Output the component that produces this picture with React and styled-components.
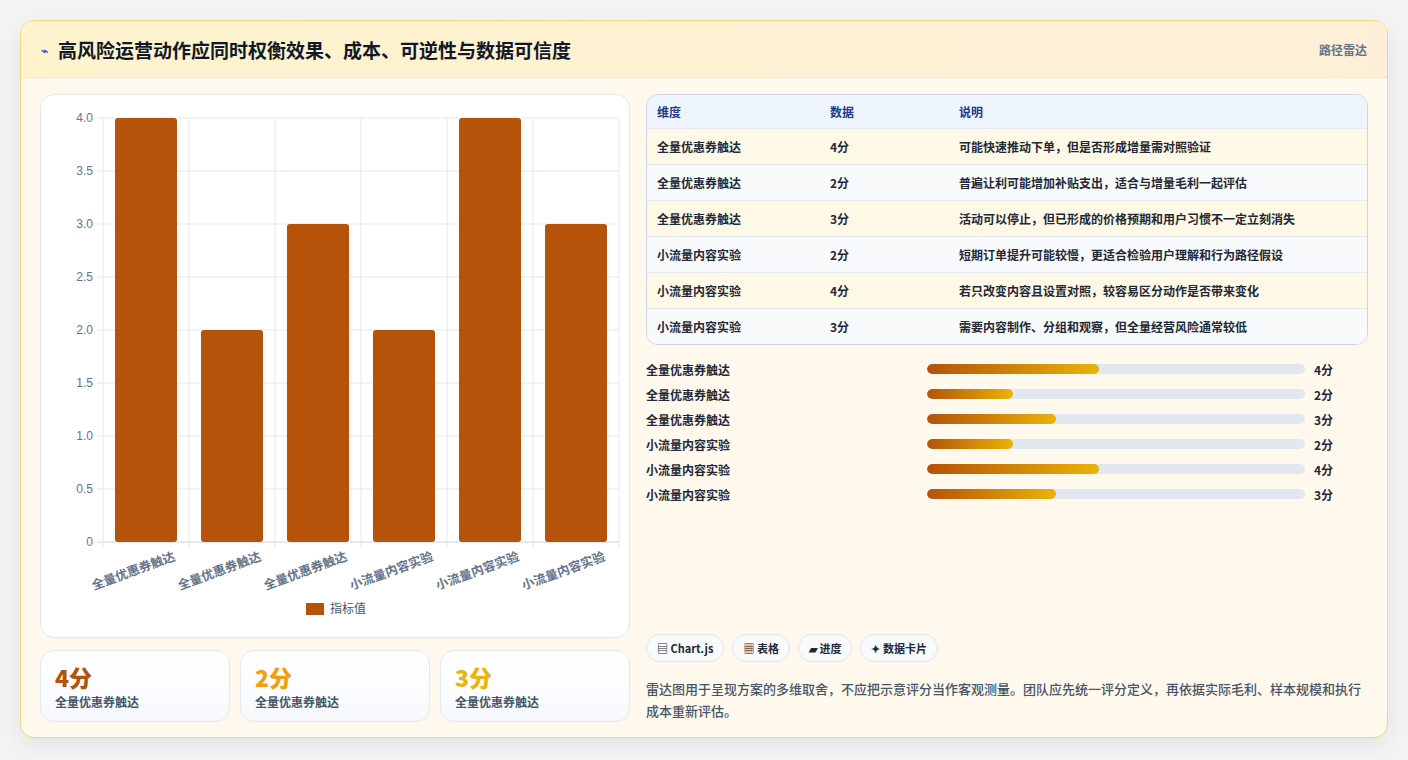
import React from 'react';
import styled, { createGlobalStyle } from 'styled-components';

const Global = createGlobalStyle`
  body { margin: 0; background: #f4f4f5; font-family: "Noto Sans CJK SC", "Noto Sans", sans-serif; }
`;

const Page = styled.div`
  padding: 20px;
`;

const Card = styled.div`
  height: 718px;
  box-sizing: border-box;
  border: 1px solid #f3d77a;
  border-radius: 14px;
  background: #fff8ec;
  box-shadow: 0 8px 24px rgba(0,0,0,0.08);
  overflow: hidden;
  display: flex;
  flex-direction: column;
`;

const Header = styled.div`
  height: 56px;
  flex-shrink: 0;
  display: flex;
  align-items: center;
  justify-content: space-between;
  padding: 0 20px;
  background: linear-gradient(90deg, #fdf3cd, #fdefd7);
  border-bottom: 1px solid #f1e6cf;
`;

const Title = styled.h1`
  margin: 0;
  font-size: 19px;
  font-weight: 700;
  color: #111827;
  display: flex;
  align-items: center;
  gap: 10px;
`;

const Tag = styled.span`
  font-size: 12px;
  color: #64748b;
  font-weight: 600;
`;

const Body = styled.div`
  flex: 1;
  display: grid;
  grid-template-columns: 590px 1fr;
  gap: 16px;
  padding: 16px 19px 19px;
`;

const Col = styled.div`
  display: flex;
  flex-direction: column;
  gap: 12px;
  min-width: 0;
`;

const ChartCard = styled.div`
  height: 544px;
  background: #fff;
  border: 1px solid #e2e8f0;
  border-radius: 14px;
  box-sizing: border-box;
`;

const Stats = styled.div`
  display: grid;
  grid-template-columns: repeat(3, 1fr);
  gap: 10px;
`;

const Stat = styled.div`
  height: 72px;
  box-sizing: border-box;
  border: 1px solid #e2e8f0;
  border-radius: 14px;
  background: linear-gradient(180deg, #fff, #f6f9fc);
  padding: 10px 14px;
`;

const StatValue = styled.div`
  font-size: 23px;
  font-weight: 800;
  color: ${p => p.$c};
  line-height: 32px;
`;

const StatLabel = styled.div`
  font-size: 12px;
  color: #475569;
  font-weight: 600;
`;

const Table = styled.div`
  border: 1px solid #cbd5e1;
  border-radius: 12px;
  overflow: hidden;
`;

const Row = styled.div`
  display: grid;
  grid-template-columns: 173px 129px 1fr;
  height: ${p => (p.$head ? 33 : 35)}px;
  align-items: center;
  padding: 0 10px;
  font-size: 12px;
  font-weight: ${p => (p.$head ? 700 : 600)};
  color: ${p => (p.$head ? '#1e3a8a' : '#1f2937')};
  background: ${p => (p.$head ? '#eef5fe' : p.$odd ? '#fef8e6' : '#f8fafc')};
  border-top: ${p => (p.$head ? 'none' : '1px solid #e2e8f0')};
`;

const Bars = styled.div`
  display: flex;
  flex-direction: column;
  gap: 7px;
  margin-top: 3px;
`;

const BarRow = styled.div`
  display: grid;
  grid-template-columns: 272px 378px 1fr;
  gap: 9px;
  align-items: center;
  height: 18px;
  font-size: 12px;
  font-weight: 600;
  color: #1f2937;
  & > :first-child { margin-right: -9px; }
`;

const Track = styled.div`
  height: 10px;
  border-radius: 5px;
  background: #e2e8f0;
  overflow: hidden;
`;

const Fill = styled.div`
  height: 100%;
  border-radius: 5px;
  background: linear-gradient(90deg, #b45309, #eab308);
`;

const Spacer = styled.div`
  flex: 1;
`;

const Chips = styled.div`
  display: flex;
  gap: 8px;
`;

const Chip = styled.span`
  height: 28px;
  box-sizing: border-box;
  padding: 0 10px;
  display: flex;
  align-items: center;
  gap: 4px;
  border: 1px solid #e2e8f0;
  border-radius: 14px;
  background: #f8fafc;
  font-size: 11px;
  font-weight: 600;
  color: #1f2937;
`;

const Note = styled.p`
  margin: 4px 0 0;
  font-size: 13px;
  line-height: 22px;
  color: #475569;
  font-weight: 500;
`;

const rows = [
  ['全量优惠券触达', 4, '可能快速推动下单，但是否形成增量需对照验证'],
  ['全量优惠券触达', 2, '普遍让利可能增加补贴支出，适合与增量毛利一起评估'],
  ['全量优惠券触达', 3, '活动可以停止，但已形成的价格预期和用户习惯不一定立刻消失'],
  ['小流量内容实验', 2, '短期订单提升可能较慢，更适合检验用户理解和行为路径假设'],
  ['小流量内容实验', 4, '若只改变内容且设置对照，较容易区分动作是否带来变化'],
  ['小流量内容实验', 3, '需要内容制作、分组和观察，但全量经营风险通常较低'],
];

const BarChart = () => {
  const x0 = 62, x1 = 578, yTop = 23, yBot = 447;
  const step = (x1 - x0) / 6;
  const yOf = v => yBot - (v / 4) * (yBot - yTop);
  const ticks = [0, 0.5, 1, 1.5, 2, 2.5, 3, 3.5, 4];
  return (
    <svg width="590" height="544" style={{ display: 'block' }}>
      {ticks.map(t => (
        <g key={t}>
          <line x1={x0 - 6} x2={x1} y1={yOf(t)} y2={yOf(t)} stroke={t === 0 ? '#cbd5e1' : '#e5e7eb'} />
          <text x={x0 - 10} y={yOf(t) + 4} textAnchor="end" fontSize="12" fill="#64748b" fontFamily="Liberation Sans, sans-serif">
            {t === 0 ? '0' : t.toFixed(1)}
          </text>
        </g>
      ))}
      {Array.from({ length: 7 }).map((_, i) => (
        <line key={i} x1={x0 + i * step} x2={x0 + i * step} y1={yTop} y2={yBot + 6} stroke="#e5e7eb" />
      ))}
      {rows.map((r, i) => {
        const cx = x0 + step * (i + 0.5);
        return (
          <g key={i}>
            <rect x={cx - 31} y={yOf(r[1])} width="62" height={yBot - yOf(r[1])} rx="3" fill="#b45309" />
            <text x={cx + 30} y={yBot + 18} textAnchor="end" fontSize="12.5" fontWeight="600" fill="#64748b"
              transform={`rotate(-20 ${cx + 30} ${yBot + 18})`}>{r[0]}</text>
          </g>
        );
      })}
      <rect x="265" y="508" width="18" height="12" fill="#b45309" />
      <text x="289" y="518" fontSize="12" fill="#475569">指标值</text>
    </svg>
  );
};

const stats = [
  ['4分', '#b45309'],
  ['2分', '#f59e0b'],
  ['3分', '#eab308'],
];

export default function App() {
  return (
    <Page>
      <Global />
      <Card>
        <Header>
          <Title><span style={{ fontSize: 12, color: '#3b5bdb' }}>⌁</span>高风险运营动作应同时权衡效果、成本、可逆性与数据可信度</Title>
          <Tag>路径雷达</Tag>
        </Header>
        <Body>
          <Col>
            <ChartCard><BarChart /></ChartCard>
            <Stats>
              {stats.map(([v, c], i) => (
                <Stat key={i}>
                  <StatValue $c={c}>{v}</StatValue>
                  <StatLabel>全量优惠券触达</StatLabel>
                </Stat>
              ))}
            </Stats>
          </Col>
          <Col>
            <Table>
              <Row $head><span>维度</span><span>数据</span><span>说明</span></Row>
              {rows.map((r, i) => (
                <Row key={i} $odd={i % 2 === 0}><span>{r[0]}</span><span>{r[1]}分</span><span>{r[2]}</span></Row>
              ))}
            </Table>
            <Bars>
              {rows.map((r, i) => (
                <BarRow key={i}>
                  <span>{r[0]}</span>
                  <Track><Fill style={{ width: `${(r[1] / 8.8) * 100}%` }} /></Track>
                  <span>{r[1]}分</span>
                </BarRow>
              ))}
            </Bars>
            <Spacer />
            <Chips>
              <Chip>▤ Chart.js</Chip>
              <Chip>▦ 表格</Chip>
              <Chip>▰ 进度</Chip>
              <Chip>✦ 数据卡片</Chip>
            </Chips>
            <Note>雷达图用于呈现方案的多维取舍，不应把示意评分当作客观测量。团队应先统一评分定义，再依据实际毛利、样本规模和执行成本重新评估。</Note>
          </Col>
        </Body>
      </Card>
    </Page>
  );
}
